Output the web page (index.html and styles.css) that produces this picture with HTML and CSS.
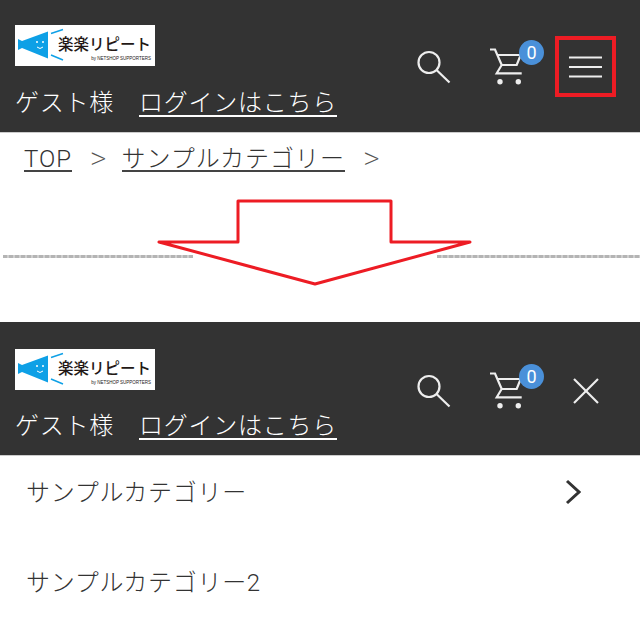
FILE: index.html
```html
<!DOCTYPE html>
<html lang="ja">
  <head>
    <meta charset="UTF-8" />
    <meta name="viewport" content="width=device-width, initial-scale=1.0" />
    <title>メニューの開閉</title>
    <link rel="stylesheet" href="styles.css">
  </head>
  <body>
    <!-- Closed menu -->
    <header class="site-head">
      <div class="head-left">
        <a class="logo" href="#">
          <svg class="logo-mark" viewBox="0 0 38 36" width="38" height="36">
            <polygon points="0,11 4,13 30,3.500 30,30.500 4,20 0,22" fill="#0ea0e6" />
            <path d="M33 5.500 L45 1.500 M33 27 L45 32" stroke="#0ea0e6" stroke-width="1.500" />
            <circle cx="19" cy="14" r="1" fill="#fff" />
            <circle cx="25" cy="14" r="1" fill="#fff" />
            <path d="M19 19 Q22 22 25 19" stroke="#fff" fill="none" />
          </svg>
          <span class="logo-text">
            <span class="logo-name">楽楽リピート</span>
            <span class="logo-by">by NETSHOP SUPPORTERS</span>
          </span>
        </a>
        <div class="guest">ゲスト様<a href="#" class="login">ログインはこちら</a></div>
      </div>
      <div class="head-icons">
        <svg class="icon-search" viewBox="0 0 34 34" width="34" height="34">
          <circle cx="12" cy="12.500" r="10.500" />
          <line x1="19.500" y1="20" x2="32.500" y2="32.500" />
        </svg>
        <a class="cart" href="#">
          <svg viewBox="0 0 36 38" width="36" height="38">
            <path d="M0 1.500 H5 L11.700 17 L6.700 25.300 H31.700" />
            <path d="M7 7 H30.700 L26.700 17 H11.700" />
            <circle class="wheel" cx="10" cy="33.700" r="2.700" />
            <circle class="wheel" cx="28.300" cy="33.700" r="2.700" />
          </svg>
          <span class="badge">0</span>
        </a>
        <button class="menu-btn highlight">
          <svg viewBox="0 0 33 22" width="33" height="22">
            <line x1="0" y1="1.500" x2="33" y2="1.500" />
            <line x1="0" y1="11" x2="33" y2="11" />
            <line x1="0" y1="20.500" x2="33" y2="20.500" />
          </svg>
        </button>
      </div>
    </header>
    <nav class="crumbs">
      <a href="#">TOP</a><span class="sep">&gt;</span><a href="#">サンプルカテゴリー</a><span class="sep">&gt;</span>
    </nav>

    <!-- Arrow between the two states -->
    <div class="between">
      <div class="scribble"></div>
      <div class="scribble right"></div>
      <svg class="arrow" viewBox="0 0 320 90" width="320" height="90">
        <polygon points="79,2 232,2 232,43 311,43 156,85 0,43 79,43" />
      </svg>
    </div>

    <!-- Open menu -->
    <header class="site-head open">
      <div class="head-left">
        <a class="logo" href="#">
          <svg class="logo-mark" viewBox="0 0 38 36" width="38" height="36">
            <polygon points="0,11 4,13 30,3.500 30,30.500 4,20 0,22" fill="#0ea0e6" />
            <path d="M33 5.500 L45 1.500 M33 27 L45 32" stroke="#0ea0e6" stroke-width="1.500" />
            <circle cx="19" cy="14" r="1" fill="#fff" />
            <circle cx="25" cy="14" r="1" fill="#fff" />
            <path d="M19 19 Q22 22 25 19" stroke="#fff" fill="none" />
          </svg>
          <span class="logo-text">
            <span class="logo-name">楽楽リピート</span>
            <span class="logo-by">by NETSHOP SUPPORTERS</span>
          </span>
        </a>
        <div class="guest">ゲスト様<a href="#" class="login">ログインはこちら</a></div>
      </div>
      <div class="head-icons">
        <svg class="icon-search" viewBox="0 0 34 34" width="34" height="34">
          <circle cx="12" cy="12.500" r="10.500" />
          <line x1="19.500" y1="20" x2="32.500" y2="32.500" />
        </svg>
        <a class="cart" href="#">
          <svg viewBox="0 0 36 38" width="36" height="38">
            <path d="M0 1.500 H5 L11.700 17 L6.700 25.300 H31.700" />
            <path d="M7 7 H30.700 L26.700 17 H11.700" />
            <circle class="wheel" cx="10" cy="33.700" r="2.700" />
            <circle class="wheel" cx="28.300" cy="33.700" r="2.700" />
          </svg>
          <span class="badge">0</span>
        </a>
        <button class="menu-btn">
          <svg viewBox="0 0 26 26" width="26" height="26">
            <line x1="1" y1="1" x2="25" y2="25" />
            <line x1="25" y1="1" x2="1" y2="25" />
          </svg>
        </button>
      </div>
    </header>
    <ul class="menu">
      <li>
        <a href="#">サンプルカテゴリー</a>
        <svg class="chevron" viewBox="0 0 16 26" width="16" height="26">
          <polyline points="2,2 14,13 2,24" />
        </svg>
      </li>
      <li><a href="#">サンプルカテゴリー2</a></li>
    </ul>
  </body>
</html>
```

FILE: styles.css
```css
body {
  font-family: Roboto, "Noto Sans CJK JP", sans-serif;
  margin: 0;
  width: 640px;
  height: 625px;
  overflow: hidden;
  background-color: #fff;
  color: #333;
}
a {
  color: inherit;
  text-decoration: none;
}
.site-head {
  display: flex;
  justify-content: space-between;
  height: 133px;
  box-sizing: border-box;
  padding: 25px 24px 0 15px;
  background-color: #333;
  border-bottom: 1px solid #ccc;
  color: #fff;
}
.site-head.open {
  height: 134px;
  padding-top: 27px;
}
.logo {
  display: flex;
  align-items: center;
  gap: 2px;
  box-sizing: border-box;
  width: 140px;
  height: 41px;
  padding-left: 3px;
  background-color: #fff;
  color: #231815;
}
.logo-mark {
  flex: none;
  overflow: visible;
}
.logo-text {
  display: flex;
  flex-direction: column;
  align-items: flex-end;
  margin-top: 6px;
}
.logo-name {
  font-size: 15.500px;
  line-height: 20px;
  font-weight: 500;
  white-space: nowrap;
}
.logo-by {
  font-family: "Liberation Sans", sans-serif;
  font-size: 4.500px;
  line-height: 7px;
  white-space: nowrap;
}
.guest {
  margin-top: 25px;
  font-size: 24px;
  line-height: 24px;
  letter-spacing: 0.750px;
  font-weight: 300;
  white-space: nowrap;
}
.open .guest {
  margin-top: 24px;
}
.login {
  display: inline-block;
  margin-left: 25px;
  border-bottom: 2px solid #fff;
}
.head-icons {
  display: flex;
  align-items: flex-start;
  margin-top: 11px;
}
.head-icons svg {
  fill: none;
  stroke: #eee;
  stroke-width: 2.200;
}
.icon-search {
  margin-top: 14px;
}
.cart {
  position: relative;
  display: block;
  height: 38px;
  margin: 12px 29px 0 39px;
}
.head-icons .cart .wheel {
  fill: #eee;
  stroke: none;
}
.badge {
  position: absolute;
  top: -8px;
  left: 29px;
  width: 25px;
  height: 25px;
  border-radius: 50%;
  background-color: #4a90d9;
  color: #fff;
  font-size: 18px;
  line-height: 25px;
  text-align: center;
}
.menu-btn {
  display: flex;
  align-items: center;
  justify-content: center;
  box-sizing: border-box;
  width: 61px;
  height: 61px;
  padding: 0;
  border: 4px solid transparent;
  background: none;
}
.menu-btn.highlight {
  border-color: #ed1c24;
}
.crumbs {
  height: 57px;
  box-sizing: border-box;
  padding: 14px 0 0 24px;
  font-size: 24px;
  line-height: 22px;
  letter-spacing: 1px;
  font-weight: 300;
}
.crumbs a {
  display: inline-block;
  border-bottom: 2px solid #444;
}
.crumbs .sep {
  margin: 0 15px 0 18px;
  color: #555;
  font-size: 32px;
  font-weight: 200;
  line-height: 22px;
  letter-spacing: 0;
  vertical-align: -2px;
}
.between {
  position: relative;
  display: flex;
  justify-content: space-between;
  height: 132px;
  box-sizing: border-box;
  padding: 65px 0 0 3px;
}
.scribble {
  width: 190px;
  height: 3px;
  background: repeating-linear-gradient(90deg, #b4b4b4 0, #b4b4b4 4px, #cfcfcf 4px, #cfcfcf 6px);
}
.scribble.right {
  width: 203px;
}
.arrow {
  position: absolute;
  top: 9px;
  left: 159px;
  overflow: visible;
}
.arrow polygon {
  fill: #fff;
  stroke: #ed1c24;
  stroke-width: 3;
  stroke-linejoin: round;
}
.menu {
  display: flex;
  flex-direction: column;
  gap: 22px;
  margin: 0;
  padding: 0;
  list-style: none;
}
.menu li {
  display: flex;
  align-items: center;
  justify-content: space-between;
  height: 68px;
  padding: 0 59px 0 26px;
  font-size: 24px;
  letter-spacing: 0.700px;
  font-weight: 300;
}
.chevron {
  fill: none;
  stroke: #333;
  stroke-width: 3;
  margin-top: 4px;
}
```
